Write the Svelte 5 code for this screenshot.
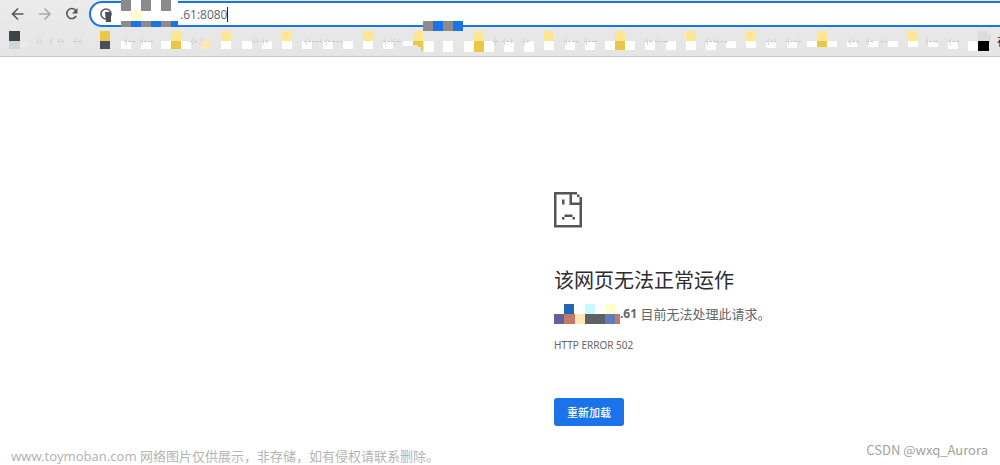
<script>
	let address = '.61:8080';

	const yellow = '#ffe694';
	const gold = '#eac744';
	const grey = '#8b8b8b';
	const blue = '#1a73e8';

	// white blocks over the bookmark names: x, height
	const blanks = [
		[121, 8], [141, 8], [161, 8], [181, 8], [221, 8], [242, 8], [262, 8], [282, 8],
		[302, 8], [323, 8], [343, 8], [363, 8], [383, 8], [403, 5], [424, 11], [443, 11],
		[464, 11], [484, 11], [504, 11], [524, 11], [544, 9], [565, 9], [585, 9], [605, 9],
		[625, 9], [645, 9], [666, 9], [686, 9], [706, 9], [726, 7], [746, 7], [766, 7],
		[787, 7], [807, 6], [827, 6], [847, 6], [868, 6], [888, 6], [908, 6], [928, 6],
		[948, 8], [968, 10]
	];
	const folders = [171, 221, 282, 363, 413, 474, 544, 615, 686, 746, 817, 908];
	const goldCells = [[171, 8], [474, 11], [615, 9], [817, 6]];

	// what is left of the names: x, width
	const traces = [
		[36, 6], [49, 4], [57, 7], [73, 9], [124, 12], [140, 13], [190, 7], [200, 11],
		[252, 7], [261, 7], [304, 18], [324, 20], [383, 10], [392, 9], [493, 5], [502, 11],
		[522, 7], [564, 16], [584, 13], [645, 7], [655, 13], [705, 11], [716, 12],
		[766, 10], [786, 15], [848, 11], [866, 8], [880, 8], [925, 13], [948, 12]
	];
</script>

<div class="page">
	<header>
		<div class="toolbar">
			<button aria-label="后退">
				<svg width="16" height="16" viewBox="0 0 16 16"><path d="M13.500 8H2.500M8 2.500L2.500 8L8 13.500" /></svg>
			</button>
			<button aria-label="前进" disabled>
				<svg width="16" height="16" viewBox="0 0 16 16"><path d="M2 8h11M7.500 2.500L13 8L7.500 13.500" /></svg>
			</button>
			<button aria-label="刷新">
				<svg width="16" height="16" viewBox="0 0 16 16">
					<path d="M11.800 4.500A5 5 0 1 0 12.200 10" />
					<path class="fill" d="M13.500 2v5.500H8z" />
				</svg>
			</button>
			<div class="omnibox">
				<svg class="info" width="14" height="18" viewBox="0 0 14 18">
					<circle cx="5" cy="9" r="5" />
					<path d="M4 7h6v10H5z" />
				</svg>
				<input aria-label="地址" bind:value={address} />
				<span class="caret"></span>
			</div>
			<svg class="mask host" width="57" height="28" viewBox="0 0 57 28" aria-hidden="true">
				<rect width="57" height="25" y="0" fill="#fff" />
				{#each [0, 20, 40] as x}
					<rect {x} width="10" height="11" fill={grey} />
					<rect {x} y="21" width="10" height="6" fill={grey} />
					<rect x={x + 10} y="21" width={x === 40 ? 7 : 10} height="6" fill={blue} />
				{/each}
				<rect x="10" y="11" width="10" height="10" fill="#ffffcb" />
			</svg>
		</div>
		<nav aria-label="书签">
			<svg class="marks" width="997" height="28" viewBox="0 28 997 28" aria-hidden="true">
				{#each blanks as [x, h]}
					<rect {x} y="41" width="10" height={h} fill="#fff" />
				{/each}
				{#each traces as [x, w]}
					<path class="trace" d="M{x} 41.500h{w}" />
					<path class="stem" d="M{x + 2.5} 38v7M{x + w - 1.5} 39v4" />
				{/each}
				{#each folders as x}
					<rect {x} y="31" width="10" height="10" fill={yellow} />
				{/each}
				{#each goldCells as [x, h]}
					<rect {x} y="41" width="10" height={h} fill={gold} />
				{/each}
				<path d="M413 41h10v10h-2v-4h-3v-2h-5z" fill={gold} />
				<rect x="9" y="31" width="11" height="10" fill="#3f4447" />
				<rect x="9" y="41" width="11" height="8" fill="#d2d5d5" />
				<rect x="20" y="41" width="9" height="7" fill="#eaeaea" />
				<rect x="100" y="31" width="10" height="10" fill={gold} />
				<rect x="100" y="41" width="10" height="8" fill="#4d4f58" />
				<rect x="201" y="41" width="10" height="8" fill="#ffe6b7" />
				<rect x="978" y="31" width="10" height="10" fill="#dcdcdc" />
				<rect x="978" y="41" width="11" height="10" fill="#000" />
				<path d="M989.500 34v9" stroke="#ecc9a0" />
			</svg>
			<a href="#bookmark">在</a>
			<svg class="mask tab" width="40" height="10" viewBox="0 0 40 10" aria-hidden="true">
				<rect width="40" height="10" fill={grey} />
				<rect x="10" width="10" height="10" fill={blue} />
				<rect x="30" width="10" height="10" fill={blue} />
			</svg>
		</nav>
	</header>

	<main>
		<svg class="sad" width="28" height="36" viewBox="0 0 28 36" aria-hidden="true">
			<path fill-rule="evenodd" d="M0 0h23v2.500H18v8h7.500V5H28v30.500H0zM2.500 2.500V33h23V13H15.500V2.500z" />
			<path d="M23 2.500h2.500V5H23zM8 7.500h2.500v5H8zM10.500 22.500h8v2.500h-8zM8 25h2.500v2.500H8zM18.500 25H21v2.500h-2.500z" />
		</svg>
		<h1>该网页无法正常运作</h1>
		<p class="summary">
			<svg width="66" height="21" viewBox="0 0 66 21" aria-hidden="true">
				<path fill="#2464b4" d="M10 0h10v10H10z" />
				<path fill="#c5faff" d="M31 0h10v10H31z" />
				<path fill="#ffffcb" d="M51 0h10v10H51z" />
				<path fill="#61629c" d="M0 10h10v10H0z" />
				<path fill="#c27a68" d="M10 10h11v10H10zM61 10h5v10h-5z" />
				<path fill="#ffe6b7" d="M21 10h10v10H21z" />
				<path fill="#5b6165" d="M31 10h20v10H31z" />
				<path fill="#5e7dba" d="M51 10h10v10H51z" />
			</svg><strong>.61</strong> 目前无法处理此请求。
		</p>
		<p class="code">HTTP ERROR 502</p>
		<button class="reload">重新加载</button>
	</main>

	<footer>
		<span>www.toymoban.com 网络图片仅供展示，非存储，如有侵权请联系删除。</span>
		<span class="author">CSDN @wxq_Aurora</span>
	</footer>
</div>

<style>
	:global(body) {
		background: #fff;
		font-family: "Noto Sans", "Noto Sans CJK SC", sans-serif;
	}
	.page {
		min-height: 100vh;
		display: flex;
		flex-direction: column;
		overflow: hidden;
	}
	header {
		background: linear-gradient(#ebebeb, #e5e5e5);
		border-bottom: 1px solid #c8c8c8;
	}
	.toolbar {
		position: relative;
		display: flex;
		align-items: center;
		height: 28px;
		padding-left: 10px;
	}
	.toolbar button {
		width: 16px;
		height: 16px;
		margin-right: 11px;
		padding: 0;
		border: 0;
		background: none;
	}
	.toolbar svg {
		display: block;
		fill: none;
		stroke: #54575a;
		stroke-width: 1.6;
	}
	.toolbar button:disabled svg {
		stroke: #a9aaab;
	}
	.toolbar .fill {
		fill: #54575a;
		stroke: none;
	}
	.omnibox {
		flex: 1;
		display: flex;
		align-items: center;
		box-sizing: border-box;
		height: 26px;
		margin-right: -20px;
		margin-left: -2px;
		padding-left: 10px;
		border: 2px solid #1a73e8;
		border-radius: 13px;
		background: #fff;
	}
	.omnibox .info {
		overflow: visible;
	}
	.omnibox .info path {
		fill: #4d4f58;
		stroke: none;
	}
	.omnibox input {
		width: 47px;
		margin-left: 65px;
		padding: 0;
		border: 0;
		outline: 0;
		background: none;
		color: #606367;
		font: 12px "Open Sans", sans-serif;
	}
	.caret {
		width: 1px;
		height: 15px;
		background: #222;
	}
	.toolbar .mask {
		stroke: none;
	}
	.mask {
		position: absolute;
	}
	.host {
		top: 0;
		left: 121px;
	}
	nav {
		position: relative;
		display: flex;
		height: 28px;
	}
	.marks {
		flex: none;
	}
	.trace {
		stroke: #c6c8ca;
		stroke-dasharray: 3 1;
	}
	.stem {
		stroke: #d6d8da;
	}
	nav a {
		padding-top: 5px;
		color: #222;
		font-size: 12px;
		line-height: 18px;
		text-decoration: none;
		white-space: nowrap;
	}
	.tab {
		top: -7px;
		left: 423px;
	}
	main {
		flex: 1;
		padding: 135px 0 0 55.4%;
		color: #646669;
	}
	.sad {
		display: block;
		fill: #555;
	}
	h1 {
		margin: 37px 0 0;
		color: #2c2d30;
		font-size: 20px;
		font-weight: 400;
		line-height: 32px;
	}
	.summary {
		display: flex;
		align-items: center;
		margin: 5px 0 0;
		font-size: 13px;
		line-height: 24px;
		white-space: pre;
	}
	.summary strong {
		font-size: 12px;
	}
	.code {
		margin: 11px 0 0;
		font-size: 10px;
		line-height: 16px;
	}
	.reload {
		display: block;
		height: 28px;
		margin-top: 45px;
		padding: 0 13px;
		border: 0;
		border-radius: 3px;
		background: #1a73e8;
		color: #fff;
		font: 500 11px "Noto Sans CJK SC", sans-serif;
	}
	footer {
		display: flex;
		align-items: flex-end;
		justify-content: space-between;
		padding: 0 12px 0 11px;
		color: #b4b4b4;
		font-size: 13px;
		line-height: 18px;
	}
	.author {
		padding-bottom: 6px;
		color: #a2a2a2;
		font-family: "Noto Sans CJK SC", sans-serif;
	}
</style>
